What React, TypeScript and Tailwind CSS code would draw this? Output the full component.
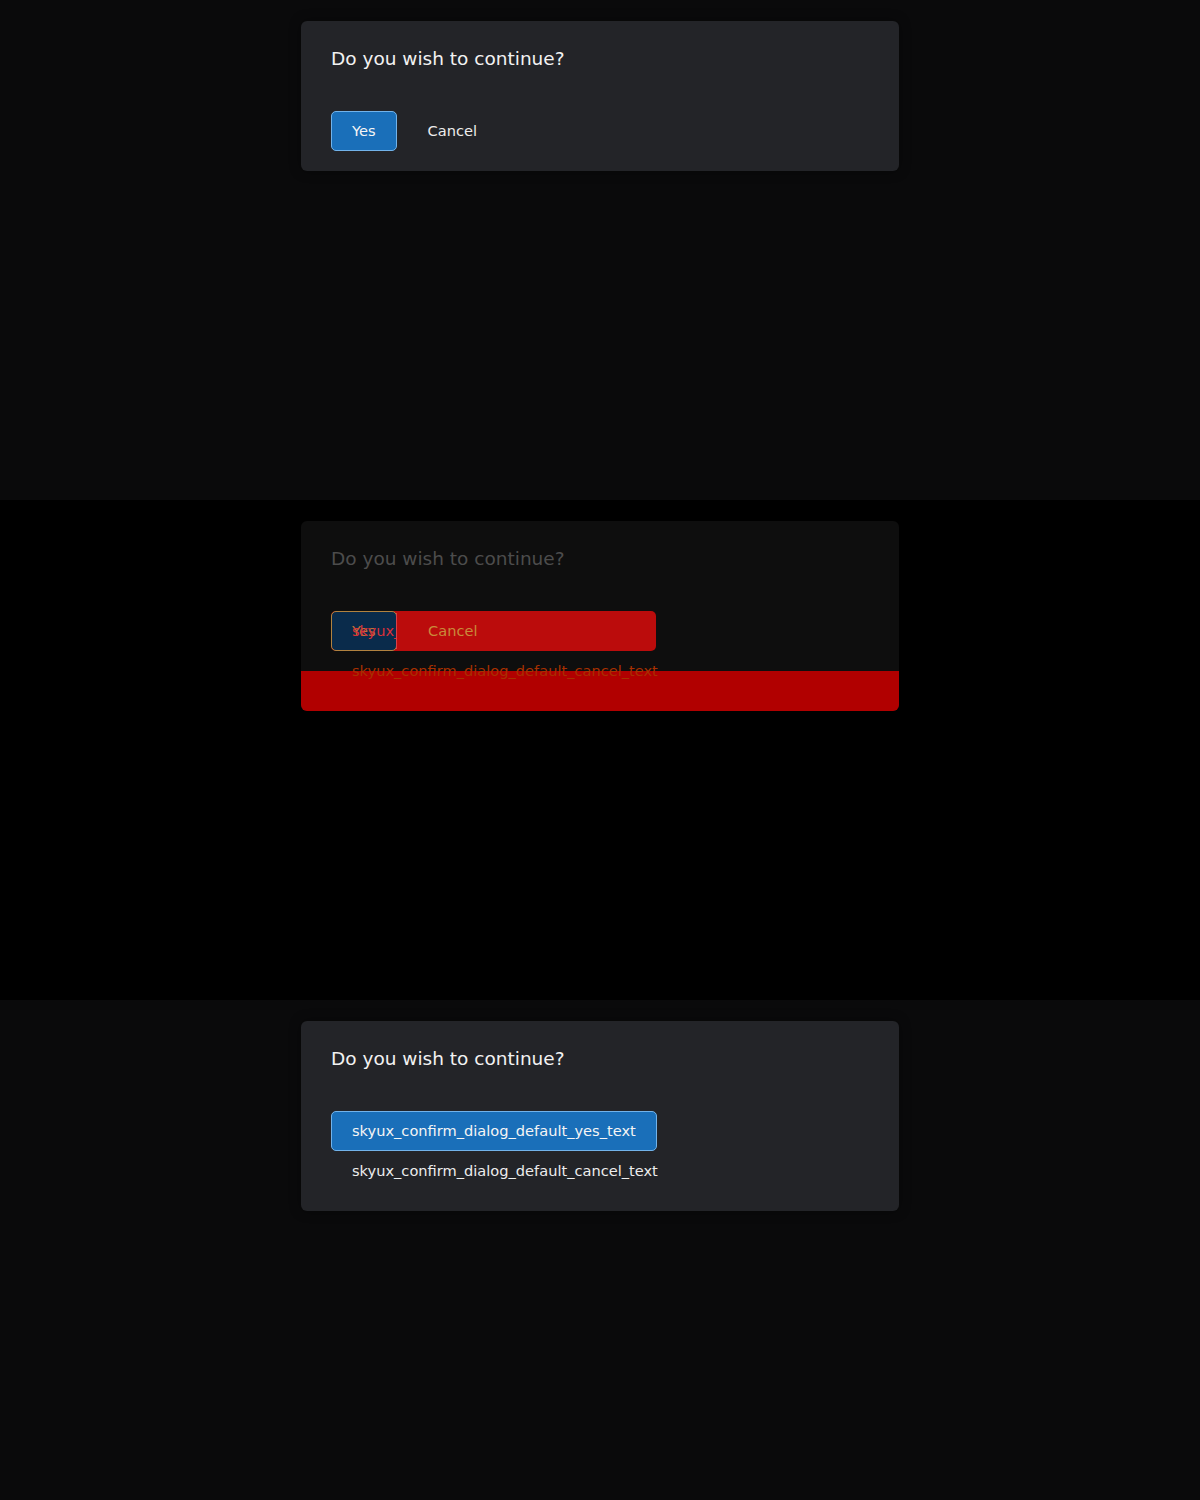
import React from "react";

const font = { fontFamily: '"DejaVu Sans", "Liberation Sans", sans-serif' };

function Dialog({ yes, cancel }: { yes: string; cancel: string }) {
  return (
    <div className="mx-auto mt-[21px] w-[598px] rounded-[6px] bg-[#232428] px-[30px] pb-5 shadow-[0_0_12px_rgba(0,0,0,0.4)]">
      <h2 className="pt-6 text-[18.5px] leading-[28px] font-normal text-[#f2f2f2]">
        Do you wish to continue?
      </h2>
      <div className="mt-[38px] flex flex-wrap gap-x-[10px]">
        <button className="h-10 rounded-[5px] border border-[#72b3ea] bg-[#1a6fb9] px-5 text-[14.6px] text-[#f5f5f5]">
          {yes}
        </button>
        <button className="h-10 rounded-[5px] border border-transparent px-5 text-[14.6px] text-[#ededed]">
          {cancel}
        </button>
      </div>
    </div>
  );
}

function DiffDialog() {
  return (
    <div className="mx-auto mt-[21px] w-[598px] overflow-hidden rounded-[6px] bg-[#0e0e0e]">
      <div className="px-[30px]">
        <h2 className="pt-6 text-[18.5px] leading-[28px] font-normal text-[#4c4c4c]">
          Do you wish to continue?
        </h2>
        <div className="relative mt-[38px] h-10 w-[325px] rounded-[5px] bg-[#bb0c0c]">
          <div className="absolute left-0 top-0 h-10 w-[66px] rounded-[5px] border border-[#b2823f] bg-[#0a2b4b]" />
          <div className="absolute left-[65px] top-[2px] h-9 w-px bg-[#d8404a]" />
          <span className="absolute left-[21px] top-0 text-[14.6px] leading-10 text-[#c0703a]">Yes</span>
          <span className="absolute left-[21px] top-0 w-[44px] overflow-hidden whitespace-nowrap text-[14.6px] leading-10 text-[#d8303a]">
            skyux_
          </span>
          <span className="absolute left-[97px] top-0 text-[14.6px] leading-10 text-[#c98a3a]">Cancel</span>
        </div>
        <div className="h-5" />
      </div>
      <div className="relative h-10 bg-[#b10000]">
        <span className="absolute left-[51px] top-[-10px] h-[18px] overflow-hidden whitespace-nowrap text-[14.6px] leading-5 text-[#a83000]">
          skyux_confirm_dialog_default_cancel_text
        </span>
      </div>
    </div>
  );
}

export default function App() {
  return (
    <div style={font} className="w-[1200px]">
      <div className="h-[500px] bg-[#0a0a0b] pt-px">
        <div className="-mt-px">
          <Dialog yes="Yes" cancel="Cancel" />
        </div>
      </div>
      <div className="h-[500px] bg-black pt-px">
        <div className="-mt-px">
          <DiffDialog />
        </div>
      </div>
      <div className="h-[500px] bg-[#0a0a0b] pt-px">
        <div className="-mt-px">
          <Dialog
            yes="skyux_confirm_dialog_default_yes_text"
            cancel="skyux_confirm_dialog_default_cancel_text"
          />
        </div>
      </div>
    </div>
  );
}
